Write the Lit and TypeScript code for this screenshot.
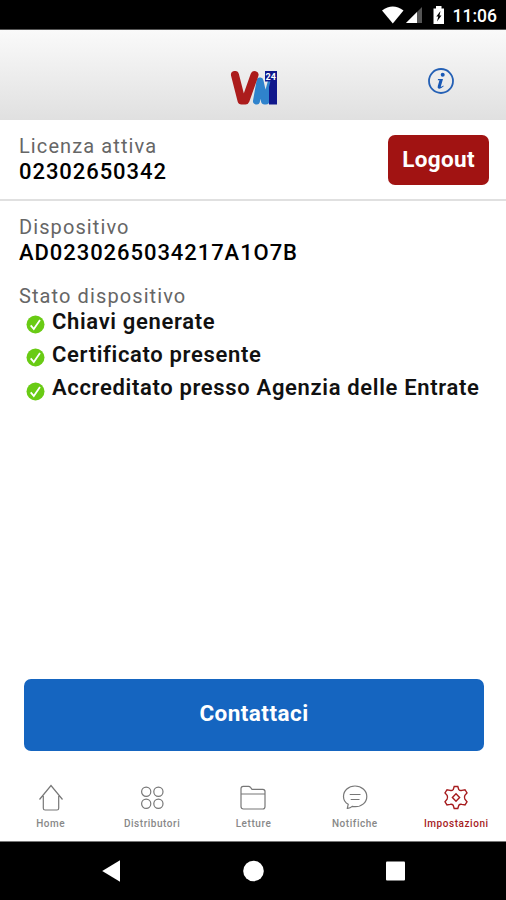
import { LitElement, html, svg, css } from "lit";
import { customElement } from "lit/decorators.js";
import { classMap } from "lit/directives/class-map.js";

const STATES = ["Chiavi generate", "Certificato presente", "Accreditato presso Agenzia delle Entrate"];

const TABS = [
  {
    label: "Home",
    cls: "home",
    icon: svg`<path d="M1.5 15.5 13 1.5 24.500 15.500M5.300 12V24.200Q5.300 26 7.100 26H19Q20.700 26 20.700 24.200V12"/>`,
  },
  {
    label: "Distributori",
    cls: "dist",
    icon: svg`<circle cx="7.200" cy="7.700" r="4.600"/><circle cx="19.400" cy="7.700" r="4.600"/><circle cx="7.200" cy="19.800" r="4.600"/><circle cx="19.400" cy="19.800" r="4.600"/>`,
  },
  {
    label: "Letture",
    cls: "lett",
    icon: svg`<path d="M1 22.500V4.500Q1 2.300 3.200 2.300H8.500Q9.700 2.300 10.500 3.400L12 5.300H22.800Q25 5.300 25 7.500V22.500Q25 25 22.800 25H3.500Q1 25 1 22.500ZM1 10H25"/>`,
  },
  {
    label: "Notifiche",
    cls: "noti",
    icon: svg`<path d="M5.300 24.300 6.200 20.300C3.300 18.700 1.500 15.900 1.500 12.500 1.500 6.500 6.600 2 13 2S24.800 6.500 24.800 12.500 19.600 22.700 13.200 22.700Q11.600 22.700 10.200 22.400Q8.200 24.400 5.300 24.300ZM7.700 10.500H18.500M8.700 15.500H17.500"/>`,
  },
  {
    label: "Impostazioni",
    cls: "impo",
    active: true,
    icon: svg`<path d="M11.200 2.500H14.800L15.800 5.600Q17 7 18.900 6.400L22 5.700 24 8.900 21.900 11.300Q20.900 13.500 21.900 15.200L24 17.900 22 21 18.900 20.400Q17 19.800 15.800 21.300L14.800 24.500H11.200L10.200 21.300Q9 19.800 7.100 20.400L4 21 2 17.900 4.100 15.200Q5.100 13.500 4.100 11.300L2 8.900 4 5.700 7.100 6.400Q9 7 10.200 5.600Z"/><path d="M13 9.800 16.600 13.500 13 17.200 9.400 13.500Z"/>`,
  },
];

@customElement("app-root")
export class AppRoot extends LitElement {
  static styles = css`
    :host { display: flex; flex-direction: column; height: 900px; width: 506px; background: #fff; overflow: hidden; font-family: Roboto, "Liberation Sans", sans-serif; color: #111; }
    * { box-sizing: border-box; }
    svg { display: block; flex: none; }
    .status { height: 30px; flex: none; background: #000; color: #fff; display: flex; justify-content: flex-end; align-items: center; padding: 2px 9px 0 0; border-bottom: 1px solid #555; }
    .clock { font-size: 17.500px; font-weight: 500; line-height: 28px; margin-left: 7px; letter-spacing: 0; }
    .header { height: 90px; flex: none; display: grid; grid-template-columns: 1fr 48px 1fr; background: linear-gradient(#fafafa, #e0e0e0); }
    .logo { margin-top: 39px; }
    .info { margin: 37px 0 0 149.500px; }
    .license { height: 81px; flex: none; display: flex; justify-content: space-between; align-items: flex-start; border-bottom: 2px solid #e0e0e0; padding: 15px 17px 0 19px; }
    .caption { font-size: 20px; line-height: 23px; color: #666; font-weight: 400; white-space: nowrap; }
    .value { font-size: 22px; line-height: 27px; font-weight: 500; white-space: nowrap; color: #000; }
    .c1 { letter-spacing: 1.100px; }
    .v1 { letter-spacing: 0.940px; }
    .logout { width: 101px; height: 50px; border: 0; border-radius: 7px; background: #a11312; color: #fff; font: 700 22.500px/48px Roboto, sans-serif; letter-spacing: 0.350px; padding: 0 0 2px; }
    .device { flex: 1; padding: 15px 19px 0; }
    .gap { margin-top: 19px; }
    ul { list-style: none; margin: -3px 0 0; padding: 0 0 0 7px; }
    li { display: flex; align-items: center; height: 33.300px; gap: 7px; font-size: 22px; font-weight: 600; line-height: 26px; letter-spacing: 0.660px; white-space: nowrap; }
    li svg { margin-top: 6px; }
    .contact { height: 72px; flex: none; margin: 0 22px 0 24px; border: 0; border-radius: 7px; background: #1565c0; color: #fff; font: 700 22.500px/68px Roboto, sans-serif; letter-spacing: 0.450px; padding: 0 0 4px; }
    .tabs { height: 91px; flex: none; display: flex; padding-top: 33px; border-bottom: 1px solid #777; }
    .tab { width: 101.400px; flex: none; display: flex; flex-direction: column; align-items: center; color: #888; font-size: 10px; line-height: 12px; font-weight: 500; letter-spacing: 0.550px; }
    .tab svg { fill: none; stroke: #777; stroke-width: 1.200; margin-bottom: 7px; }
    .tab.on { color: #a61b1d; }
    .tab.on svg { stroke: #a61b1d; stroke-width: 1.400; }
    .nav { height: 58px; flex: none; background: #000; display: flex; align-items: center; justify-content: center; }
  `;

  render() {
    return html`
      <div class="status">
        <svg width="64" height="22" viewBox="0 0 64 22">
          <path fill="#fff" d="M0 5.500Q10.800-2.500 21.500 5.500L10.800 18.500Z"/>
          <path fill="#555" d="M40 2V18H24Z"/><path fill="#fff" d="M35 7V18H24Z"/>
          <path fill="#fff" d="M51.500 3.500H54V1H59.500V3.500H62V19H51.500Z"/>
          <path fill="#000" d="M58.500 6 54.300 11.500H56.300L55 16.500 59.500 10.500H57.500Z"/>
        </svg>
        <span class="clock">11:06</span>
      </div>
      <div class="header">
        <span></span>
        <svg class="logo" width="48" height="38" viewBox="0 0 48 38">
          <path d="M27.500 32 31 12 35.500 32H37L42 14" fill="none" stroke="#2f83cc" stroke-width="7" stroke-linecap="round" stroke-linejoin="round"/>
          <path d="M41.500 12H48V35.500H40V18Z" fill="#10188c"/>
          <path d="M6 6 12.500 31.500H16.500L25.500 6" fill="none" stroke="#ac1c1c" stroke-width="8" stroke-linecap="round" stroke-linejoin="round"/>
          <path d="M36 2H48V12.500H36Z" fill="#10188c"/>
          <text x="36.500" y="11" font-size="9" font-weight="700" fill="#fff">24</text>
        </svg>
        <svg class="info" width="28" height="28" viewBox="0 0 28 28">
          <circle cx="14" cy="14" r="12" fill="none" stroke="#2460b5" stroke-width="1.800"/>
          <circle cx="15.700" cy="7.800" r="2" fill="#1858b5"/>
          <path d="M11 12H16L13.800 19.500Q13.800 20.500 16.300 18.500L16.700 19.300Q13.500 22.300 11.500 21.500 10.200 21 10.800 19L12.500 13.200H10.800Z" fill="#1858b5"/>
        </svg>
      </div>
      <div class="license">
        <div>
          <div class="caption c1">Licenza attiva</div>
          <div class="value v1">02302650342</div>
        </div>
        <button class="logout">Logout</button>
      </div>
      <div class="device">
        <div class="caption c1">Dispositivo</div>
        <div class="value v1">AD0230265034217A1O7B</div>
        <div class="caption c1 gap">Stato dispositivo</div>
        <ul>
          ${STATES.map((s) => html`<li>
            <svg width="19" height="19" viewBox="0 0 19 19"><circle cx="9.500" cy="9.500" r="9" fill="#69cb14"/><path d="M4.700 10.300 7.800 14 14 5" fill="none" stroke="#fff" stroke-width="1.800"/></svg>
            <span>${s}</span>
          </li>`)}
        </ul>
      </div>
      <button class="contact">Contattaci</button>
      <div class="tabs">
        ${TABS.map((t) => html`<div class=${classMap({ tab: true, on: !!t.active, [t.cls]: true })}>
          <svg width="26" height="27" viewBox="0 0 26 27">${t.icon}</svg>
          <span>${t.label}</span>
        </div>`)}
      </div>
      <div class="nav">
        <svg width="304" height="24" viewBox="0 0 304 24" fill="#fff">
          <path d="M1.200 12 19 1.200V22.800Z"/><circle cx="152.500" cy="12" r="10.300"/><rect x="285" y="2.500" width="19" height="19" rx="1"/>
        </svg>
      </div>
    `;
  }
}
